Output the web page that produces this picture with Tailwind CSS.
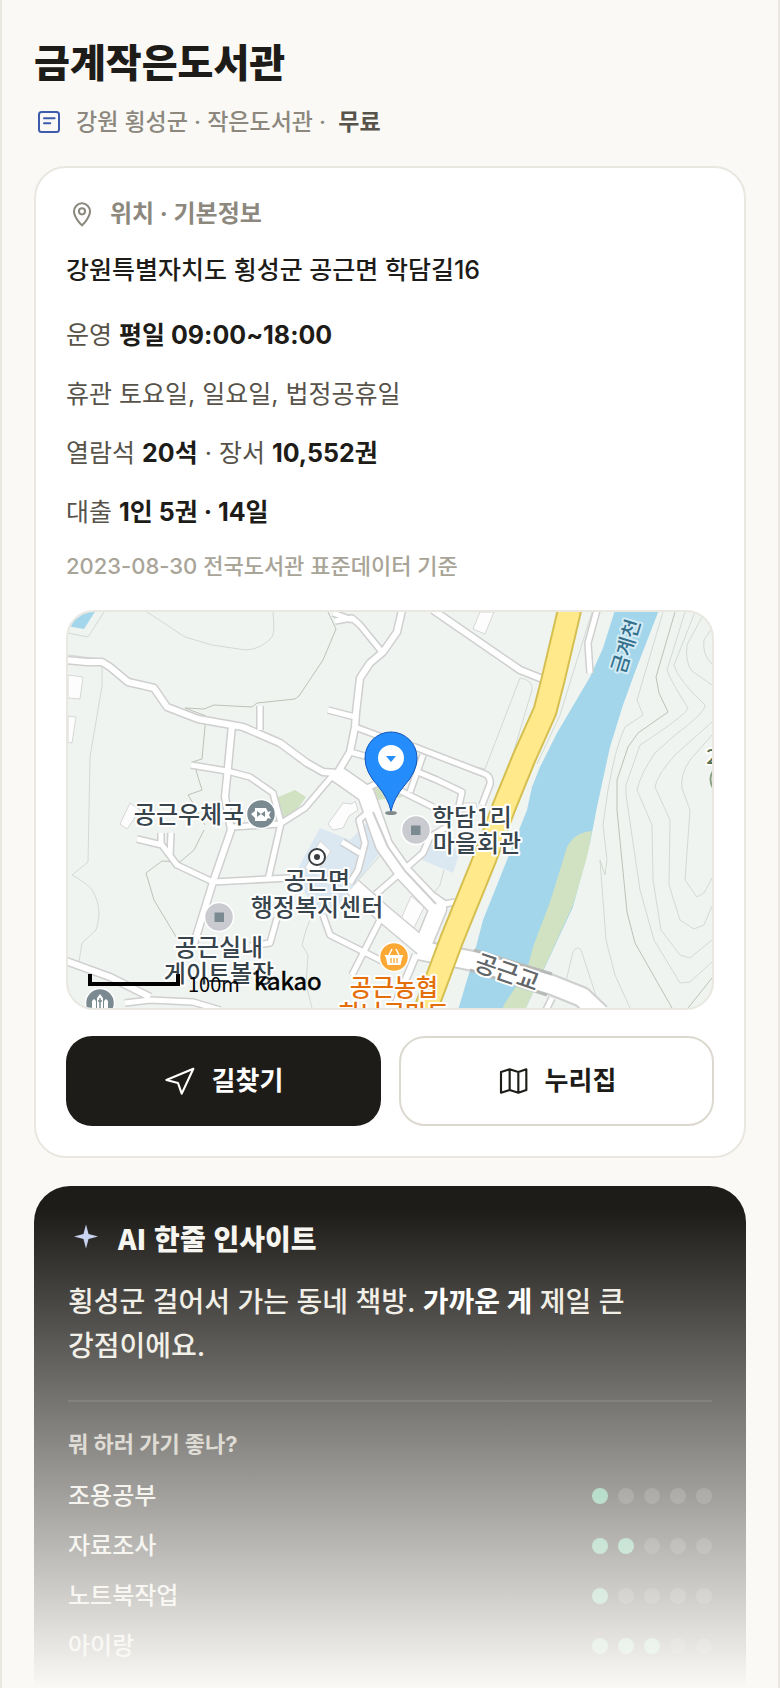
<!DOCTYPE html>
<html lang="ko">
<head>
  <meta charset="UTF-8" />
  <meta name="viewport" content="width=device-width, initial-scale=1.0"/>
  <title>금계작은도서관</title>
  <script src="https://cdn.jsdelivr.net/npm/@tailwindcss/browser@4"></script>
</head>
<body class="bg-[#faf9f6] font-['Inter','Noto_Sans_CJK_KR',sans-serif] font-medium text-[#1e1c18]">

  <main class="min-h-screen border-x-2 border-[#e9e7e0] px-8 pt-9">

    <!-- Title -->
    <h1 class="text-[39px] leading-[48px] font-black font-['Noto_Sans_CJK_KR',sans-serif]">금계작은도서관</h1>
    <div class="mt-5 flex items-center gap-3 text-[23px] leading-[36px] text-[#8c887e]">
      <svg class="size-[30px] shrink-0" viewBox="0 0 24 24" fill="none" stroke="#3f5bab" stroke-width="1.6" stroke-linecap="round">
        <rect x="4" y="4" width="16" height="16" rx="2"/>
        <path d="M8 9h8.5M8 13h5"/>
      </svg>
      <p>강원 횡성군 · 작은도서관 ·&nbsp; <b class="font-bold text-[#57534a]">무료</b></p>
    </div>

    <!-- Location -->
    <section class="mt-[26px] rounded-[32px] border-2 border-[#e9e7e0] bg-white px-[30px] pt-7 pb-[30px]">
      <h2 class="flex items-center gap-3 text-[24px] leading-[36px] font-bold text-[#8c887e]">
        <svg class="size-8 shrink-0" viewBox="0 0 24 24" fill="none" stroke="currentColor" stroke-width="1.5">
          <path d="M12 20.5c0 0 6-5.6 6-10.500a6 6 0 1 0-12 0c0 4.900 6 10.500 6 10.500z"/>
          <circle cx="12" cy="10" r="2.300"/>
        </svg>
        위치 · 기본정보
      </h2>
      <p class="mt-[18px] text-[25px] leading-[40px]">강원특별자치도 횡성군 공근면 학담길16</p>
      <div class="mt-[25px] flex flex-col gap-[19px] text-[25px] leading-[40px] font-normal text-[#57534a]">
        <p>운영 <b class="font-bold text-[#1e1c18]">평일 09:00~18:00</b></p>
        <p>휴관 토요일, 일요일, 법정공휴일</p>
        <p>열람석 <b class="font-bold text-[#1e1c18]">20석</b> · 장서 <b class="font-bold text-[#1e1c18]">10,552권</b></p>
        <p>대출 <b class="font-bold text-[#1e1c18]">1인 5권 · 14일</b></p>
      </div>
      <p class="mt-[18px] text-[22px] leading-[32px] text-[#a8a498]">2023-08-30 전국도서관 표준데이터 기준</p>

      <!-- Map -->
      <div class="mt-7 overflow-hidden rounded-[28px] border-2 border-[#e9e7e0] bg-[#eff4f1]">
        <svg class="block w-full" viewBox="68 612 644 396" fill="none" stroke-linejoin="round" font-family="'Noto Sans CJK KR', sans-serif" font-size="24" font-weight="500">
          <defs>
            <g id="minor">
              <path d="M333 613L352 620M335 621L352 618L360 625L382 652"/>
              <path d="M328 710L355 717M355 727L390 740L415 747L485 774Q491 777 490 784L482 805"/>
              <path d="M350 752L372 758M418 772L437 780L462 792L459 806M423 755L410 792M395 788L433 807M363 792L367 788L378 783"/>
              <path d="M260 706V730M191 765L227 771L250 777L273 793L281 823L268 880"/>
              <path d="M232 827L280 824L305 808L333 775"/>
              <path d="M137 839L162 845L177 865L213 882L290 878M161 833V845M171 833L170 856"/>
              <path d="M125 1003L150 1000L193 1002L220 1010M250 946L270 943L277 918"/>
              <path d="M323 915L330 935L360 950L388 964M352 975L380 920"/>
              <path d="M376 894L407 867L423 853L430 837L450 825"/>
              <path d="M342 842L360 853M368 812L359 820L365 843L358 870L350 883M455 902L445 904L434 896"/>
              <path d="M597 610L588 643L590 673M552 998L545 1012"/>
            </g>
            <g id="street">
              <path d="M66 660L87 662H102L110 667L128 682L154 688L167 707L198 719L243 727L280 743L307 763L323 772L338 773"/>
              <path d="M402 610L397 632L383 652L370 663L360 678L356 713L355 727L350 752L338 772"/>
              <path d="M232 725L228 767L225 797L231 830L213 882L193 947"/>
              <path d="M66 961L110 977L150 997M433 610L520 670L545 680M416 955L393 1010"/>
            </g>
            <g id="main">
              <path d="M336 773L366 794L384 845L403 872L438 909L421 950M353 887L387 917L424 948"/>
            </g>
          </defs>

          <!-- Water, parks, public land -->
          <path fill="#a3d6ea" d="M66 610H96L84 629L66 626z"/>
          <path fill="#a3d6ea" d="M615 610L603 648L590 677L557 733L540 767L532 787L527 810L507 860L483 920L470 970L458 1010H525L573 907L590 843L597 807L610 747L623 705L635 672L659 610z"/>
          <path fill="#d0e2c1" d="M592 831Q575 832 567 847L560 870L550 902L533 947L527 970L505 1003L502 1010H525L573 905L587 857z"/>
          <path fill="#d0e2c1" d="M276 798L295 790L306 797L296 811L283 819zM370 790L382 787L403 797L377 800z"/>
          <path fill="#dce8f1" d="M320 828L350 840L370 820L382 850L353 887L327 917L305 893L297 870zM430 845L422 860L453 873L461 849z"/>

          <!-- Contour lines and trails -->
          <g stroke="#d3d9d3">
            <path d="M147 612L185 637L212 645L246 650Q262 649 272 637Q275 632 273 612M68 633L88 637L104 612M68 655L100 659L102 668V686L90 757L88 862L72 875Q88 884 92 890Q99 900 99 915Q98 925 96 930L82 943L79 962"/>
            <path d="M592 612L560 715L537 764M520 678Q533 680 532 690L512 757M520 678L485 769L467 765"/>
            <path d="M663 612L637 700L643 715L625 727Q616 745 608 790L603 825L607 860L605 875L600 860L606 940L615 975L630 1008"/>
            <path d="M685 612L667 670Q670 680 688 708Q686 715 640 745L626 785V795L640 890L654 940L680 983L690 982L712 962"/>
            <path d="M695 612L674 665Q678 680 705 705Q706 712 675 735L655 753Q640 775 637 790L652 825L653 880L661 930L680 955L690 958L712 940"/>
            <path d="M703 615L687 645Q685 662 692 671L712 685M712 722L675 755Q657 775 655 787L670 820L669 885L680 920L694 929L704 925L712 906"/>
            <path d="M712 628L704 640Q702 655 712 664M712 735L690 760Q680 775 682 788L690 810L685 880L697 897L704 893L712 878M566 981L573 952Q577 945 581 950L600 1008M314 910L306 930L302 945L308 955L306 985L312 1008M384 851L354 885M444 870L440 885L434 893"/>
          </g>
          <g stroke="#bcc2b6">
            <path d="M328 612L336 629L323 660L299 696L295 699L257 703L252 707L214 705L204 709L185 708L206 716L202 759L192 762M195 767L202 790L188 795L193 803L205 825M204 830L194 850L180 862L162 861L146 873L154 900L178 940"/>
            <path d="M675 612L656 677L659 693L668 712L638 733L628 747L617 780L617 810L627 912L635 943L672 1008M712 978L688 1008"/>
          </g>

          <!-- Buildings -->
          <g fill="#fcfdfc" stroke="#d6d6d6">
            <path d="M68 675L83 677L80 699L68 698zM68 716L76 717L72 743L68 742zM480 612L473 629L485 634L494 612z"/>
            <path d="M130 803L120 824L127 829L140 810zM320 841L331 851L315 875L305 868zM343 803L352 804L355 801L358 810L349 816L343 828L333 830L328 824z"/>
            <path d="M411 896L424 907L414 928L408 930L398 926zM462 803L476 803L478 812L462 812z"/>
          </g>

          <!-- Roads -->
          <g stroke="#cfcfcf">
            <use href="#minor" stroke-width="8"/>
            <use href="#street" stroke-width="9"/>
            <use href="#main" stroke-width="19"/>
            <path stroke-width="22" d="M420 950L478 962L552 985L582 997L600 1014"/>
          </g>
          <g stroke="#fff">
            <use href="#minor" stroke-width="5"/>
            <use href="#street" stroke-width="6"/>
            <use href="#main" stroke-width="16"/>
            <path stroke-width="18" d="M418 950L478 962L552 985L582 997L600 1014"/>
          </g>
          <path stroke="#cfcfcf" stroke-width="2" d="M373 812L388 847L405 871L436 904"/>
          <path stroke="#b8bab9" stroke-width="3" d="M474 950L552 974M470 970L547 995"/>
          <path stroke="#d5bf50" stroke-width="25" d="M570 608L553 680L545 711L524 758L504 807L485 858L452 939L424 1014"/>
          <path stroke="#ffe98a" stroke-width="21" d="M570 608L553 680L545 711L524 758L504 807L485 858L452 939L424 1014"/>

          <!-- Place markers -->
          <g stroke="#fff" stroke-width="1.500">
            <circle cx="261" cy="814" r="14.500" fill="#7b8a90"/>
            <circle cx="416" cy="830" r="14.500" fill="#cacbd0"/>
            <circle cx="219" cy="917" r="14.500" fill="#cacbd0"/>
            <circle cx="100" cy="1003" r="14.500" fill="#7b8a90"/>
            <circle cx="394" cy="957" r="14.500" fill="#fba834"/>
          </g>
          <path fill="#7b8a90" d="M411 825.500h9.500v9.500h-9.500zM214.500 912.500h9.500v9.500h-9.500z"/>
          <path fill="#fff" d="M251 814L255 811V808H266L268 812L271 811L269 815L271 819L268 818L266 821H255V818z"/>
          <path fill="#7b8a90" d="M257 811L261 814L257 817zM265 811L261 814L265 817z"/>
          <path fill="#fff" d="M92 1008V1001L94 999L96 1001V1008zM97 1008V998L100 994L103 998V1008zM104 1008V1001L106 999L108 1001V1008z"/>
          <path stroke="#7b8a90" stroke-width="1.500" d="M100 998V1008M98 1001H102"/>
          <path fill="#fff" d="M384.500 955H403.500L402 958L400.500 965H387.500L386 958z"/>
          <path stroke="#fff" stroke-width="1.500" d="M389 955L392 949M399 955L396 949"/>
          <path stroke="#fba834" stroke-width="1.300" d="M391 958V963M394 958V963M397 958V963"/>
          <circle cx="317" cy="857" r="8" fill="#fff" stroke="#3a3d40" stroke-width="2"/>
          <circle cx="317" cy="857" r="3" fill="#3a3d40"/>

          <!-- Labels -->
          <g fill="#37444c" stroke="#fff" stroke-width="4" paint-order="stroke" text-anchor="middle">
            <text x="189" y="823">공근우체국</text>
            <text x="317" y="889">공근면</text>
            <text x="317" y="916">행정복지센터</text>
            <text x="219" y="956">공근실내</text>
            <text x="219" y="982">게이트볼장</text>
            <text x="472" y="826">학담1리</text>
            <text x="477" y="852">마을회관</text>
            <text x="394" y="996" fill="#e46f0a">공근농협</text>
            <text x="394" y="1022" fill="#e46f0a">하나로마트</text>
            <text x="507" y="981" fill="#63676a" transform="rotate(19 507 973)">공근교</text>
            <text x="625" y="654" font-size="20" fill="#35718c" stroke="#d3ebf5" transform="rotate(-73 625 646)">금계천</text>
            <text x="712" y="764" font-size="20" fill="#587353">2</text>
          </g>
          <path stroke="#8aa183" stroke-width="2" d="M713 771Q708 779 713 788"/>

          <!-- Scale bar -->
          <path stroke="#000" stroke-width="4" stroke-linejoin="miter" d="M90 974V984H178V974"/>
          <text x="188" y="992" font-size="20" font-weight="400" fill="#000">100m</text>
          <text x="254" y="990" font-size="24" font-weight="400" fill="#000" stroke="#000" stroke-width="0.600">kakao</text>

          <!-- Pin -->
          <ellipse cx="391" cy="813" rx="6" ry="2" fill="#808a8a"/>
          <path fill="#258cfb" stroke="#1155bd" d="M391 811Q388 798 378 786Q365 772 365 758A26 26 0 0 1 417 758Q417 772 404 786Q394 798 391 811z"/>
          <circle cx="391" cy="758" r="13" fill="#fff"/>
          <path fill="#258cfb" d="M386 756H396L391 762z"/>
        </svg>
      </div>

      <div class="mt-[26px] grid grid-cols-2 gap-[18px] text-[26px] leading-[40px] font-bold">
        <button class="flex h-[90px] items-center justify-center gap-4 rounded-[26px] bg-[#1e1c18] text-white">
          <svg class="size-8" viewBox="0 0 24 24" fill="none" stroke="currentColor" stroke-width="1.6" stroke-linejoin="round">
            <path d="M22 2.800L1.800 11.200L10.500 13.500L13.300 21.500z"/>
          </svg>
          길찾기
        </button>
        <button class="flex h-[90px] items-center justify-center gap-4 rounded-[26px] border-2 border-[#dcd9d0] bg-white">
          <svg class="size-8" viewBox="0 0 24 24" fill="none" stroke="currentColor" stroke-width="1.6" stroke-linejoin="round">
            <path d="M3 5.200L9.500 3.200L16 5.200L22 3.200V18.800L16 20.800L9.500 18.800L3 20.800zM9.500 3.200V18.800M16 5.200V20.800"/>
          </svg>
          누리집
        </button>
      </div>
    </section>

    <!-- AI insight -->
    <section class="relative mt-7 rounded-t-[36px] bg-[#1e1c18] px-[34px] pt-8 pb-[17px]">
      <h2 class="flex items-center gap-[14px] font-['Noto_Sans_CJK_KR',sans-serif] text-[28px] leading-[40px] font-black text-[#f7f5f0]">
        <svg class="size-9" viewBox="0 0 24 24" fill="#c5d2f0">
          <path d="M12 3L13.700 9.300L20 11L13.700 12.700L12 19L10.300 12.700L4 11L10.300 9.300z"/>
        </svg>
        AI 한줄 인사이트
      </h2>
      <p class="mt-[22px] text-[28px] leading-[44px] break-keep text-[#efece3]">횡성군 걸어서 가는 동네 책방. <b class="font-bold text-white">가까운 게</b> 제일 큰 강점이에요.</p>
      <div class="mt-8 border-t-2 border-white/10 pt-6">
        <h3 class="text-[22px] leading-[36px] font-bold text-[#c4c0b5]">뭐 하러 가기 좋나?</h3>
        <dl class="mt-[9px] text-[24px] leading-[50px] text-[#efece3]">
          <div class="flex items-center justify-between">
            <dt>조용공부</dt>
            <dd class="flex gap-[10px]" aria-label="5점 중 1점">
              <i class="size-4 rounded-full bg-[#5ab58e]"></i>
              <i class="size-4 rounded-full bg-white/15"></i>
              <i class="size-4 rounded-full bg-white/15"></i>
              <i class="size-4 rounded-full bg-white/15"></i>
              <i class="size-4 rounded-full bg-white/15"></i>
            </dd>
          </div>
          <div class="flex items-center justify-between">
            <dt>자료조사</dt>
            <dd class="flex gap-[10px]" aria-label="5점 중 2점">
              <i class="size-4 rounded-full bg-[#5ab58e]"></i>
              <i class="size-4 rounded-full bg-[#5ab58e]"></i>
              <i class="size-4 rounded-full bg-white/15"></i>
              <i class="size-4 rounded-full bg-white/15"></i>
              <i class="size-4 rounded-full bg-white/15"></i>
            </dd>
          </div>
          <div class="flex items-center justify-between">
            <dt>노트북작업</dt>
            <dd class="flex gap-[10px]" aria-label="5점 중 1점">
              <i class="size-4 rounded-full bg-[#5ab58e]"></i>
              <i class="size-4 rounded-full bg-white/15"></i>
              <i class="size-4 rounded-full bg-white/15"></i>
              <i class="size-4 rounded-full bg-white/15"></i>
              <i class="size-4 rounded-full bg-white/15"></i>
            </dd>
          </div>
          <div class="flex items-center justify-between">
            <dt>아이랑</dt>
            <dd class="flex gap-[10px]" aria-label="5점 중 3점">
              <i class="size-4 rounded-full bg-[#5ab58e]"></i>
              <i class="size-4 rounded-full bg-[#5ab58e]"></i>
              <i class="size-4 rounded-full bg-[#5ab58e]"></i>
              <i class="size-4 rounded-full bg-white/15"></i>
              <i class="size-4 rounded-full bg-white/15"></i>
            </dd>
          </div>
        </dl>
      </div>
      <!-- fade out -->
      <div class="pointer-events-none absolute inset-x-0 top-6 bottom-0 bg-linear-to-b from-[#faf9f6]/0 to-[#faf9f6]"></div>
    </section>
  </main>

</body>
</html>
